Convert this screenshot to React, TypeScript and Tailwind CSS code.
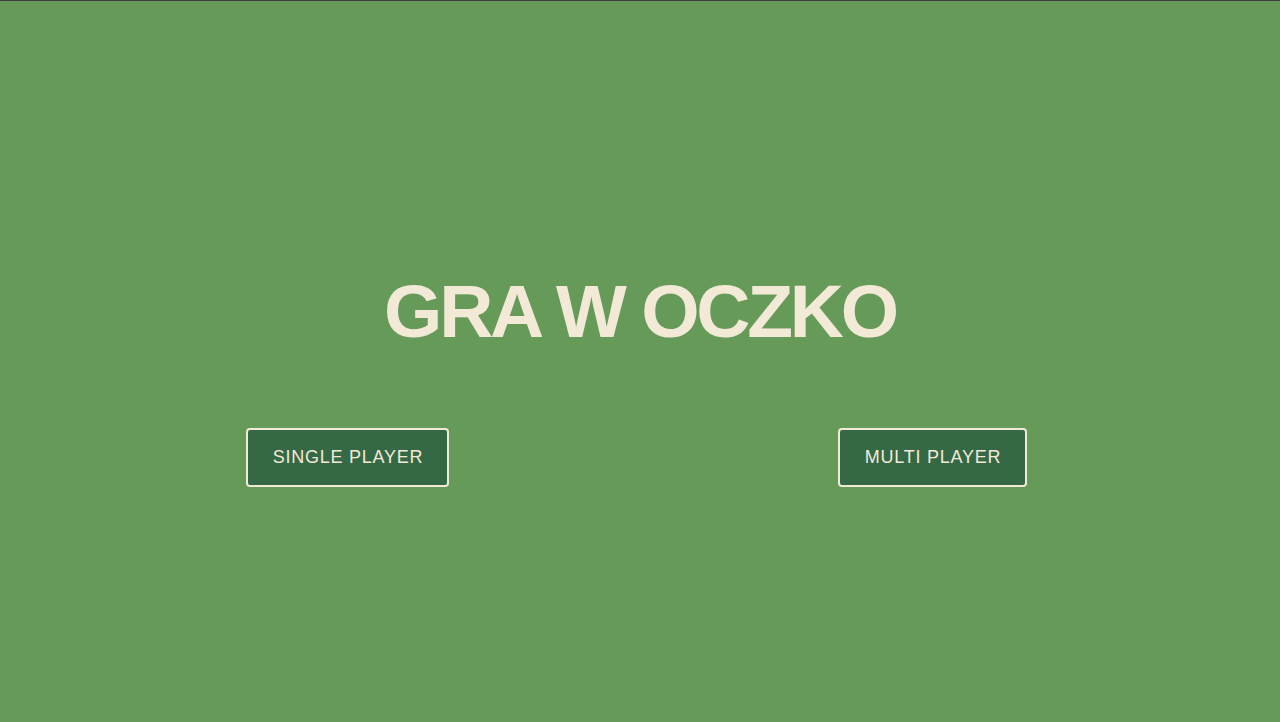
const modes = ["SINGLE PLAYER", "MULTI PLAYER"];

export default function App() {
  return (
    <div className="min-h-screen w-full bg-[#669a58] border-t border-[#3b3b3b] font-['Liberation_Sans',Arial,sans-serif]">
      <h1 className="pt-[273px] text-center text-[75px] leading-[75px] font-bold tracking-[-3.2px] text-[#f3e9d7]">
        GRA W OCZKO
      </h1>

      {/* Game modes */}
      <div className="mx-auto mt-[79px] grid w-[1170px] grid-cols-2 justify-items-center">
        {modes.map((label) => (
          <button
            key={label}
            className="flex h-[59px] items-center rounded-[4px] border-2 border-[#f3e9d7] bg-[#356845] pl-[25px] pr-[24px] text-[18px] tracking-[0.75px] text-[#f3e9d7]"
          >
            {label}
          </button>
        ))}
      </div>
    </div>
  );
}
